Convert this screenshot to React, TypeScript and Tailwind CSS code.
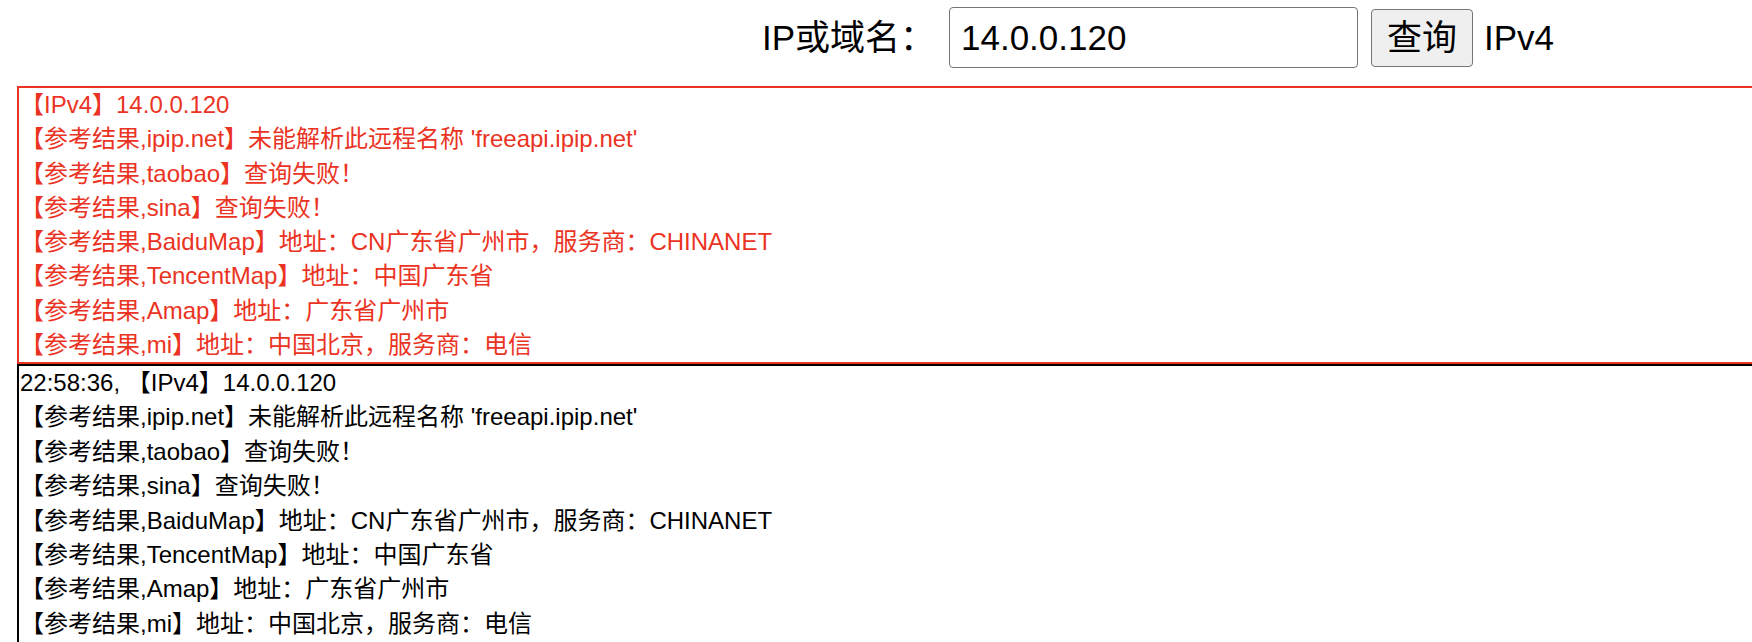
import React from "react";

const lines = [
  "【参考结果,ipip.net】未能解析此远程名称 'freeapi.ipip.net'",
  "【参考结果,taobao】查询失败！",
  "【参考结果,sina】查询失败！",
  "【参考结果,BaiduMap】地址：CN广东省广州市，服务商：CHINANET",
  "【参考结果,TencentMap】地址：中国广东省",
  "【参考结果,Amap】地址：广东省广州市",
  "【参考结果,mi】地址：中国北京，服务商：电信",
];

function App() {
  return (
    <div className="w-screen h-screen overflow-hidden bg-white text-black font-['Liberation_Sans','Noto_Sans_CJK_SC',sans-serif]">
      <div className="flex items-center pt-[7px] pl-[762px] text-[35px] leading-none">
        <span className="w-[187px]">IP或域名：</span>
        <input
          className="w-[409px] h-[61px] px-[11px] border border-[#767676] rounded-[4px] bg-white outline-none"
          defaultValue="14.0.0.120"
        />
        <button className="ml-[13px] w-[102px] h-[58px] border border-[#767676] rounded-[4px] bg-[#efefef]">
          查询
        </button>
        <span className="ml-[11px]">IPv4</span>
      </div>

      <div className="mt-[18px] ml-[17px] w-[1800px] border-2 border-[#eb3323] px-[1px] text-[24px] leading-[34.25px] text-[#eb3323]">
        <div>【IPv4】14.0.0.120</div>
        {lines.map((l) => (
          <div key={l} className="whitespace-pre">{l}</div>
        ))}
      </div>

      <div className="ml-[17px] w-[1800px] min-h-[320px] border-2 border-black px-[1px] text-[24px] leading-[34.4px]">
        <div>22:58:36, 【IPv4】14.0.0.120</div>
        {lines.map((l) => (
          <div key={l} className="whitespace-pre">{l}</div>
        ))}
      </div>
    </div>
  );
}

export default App;
